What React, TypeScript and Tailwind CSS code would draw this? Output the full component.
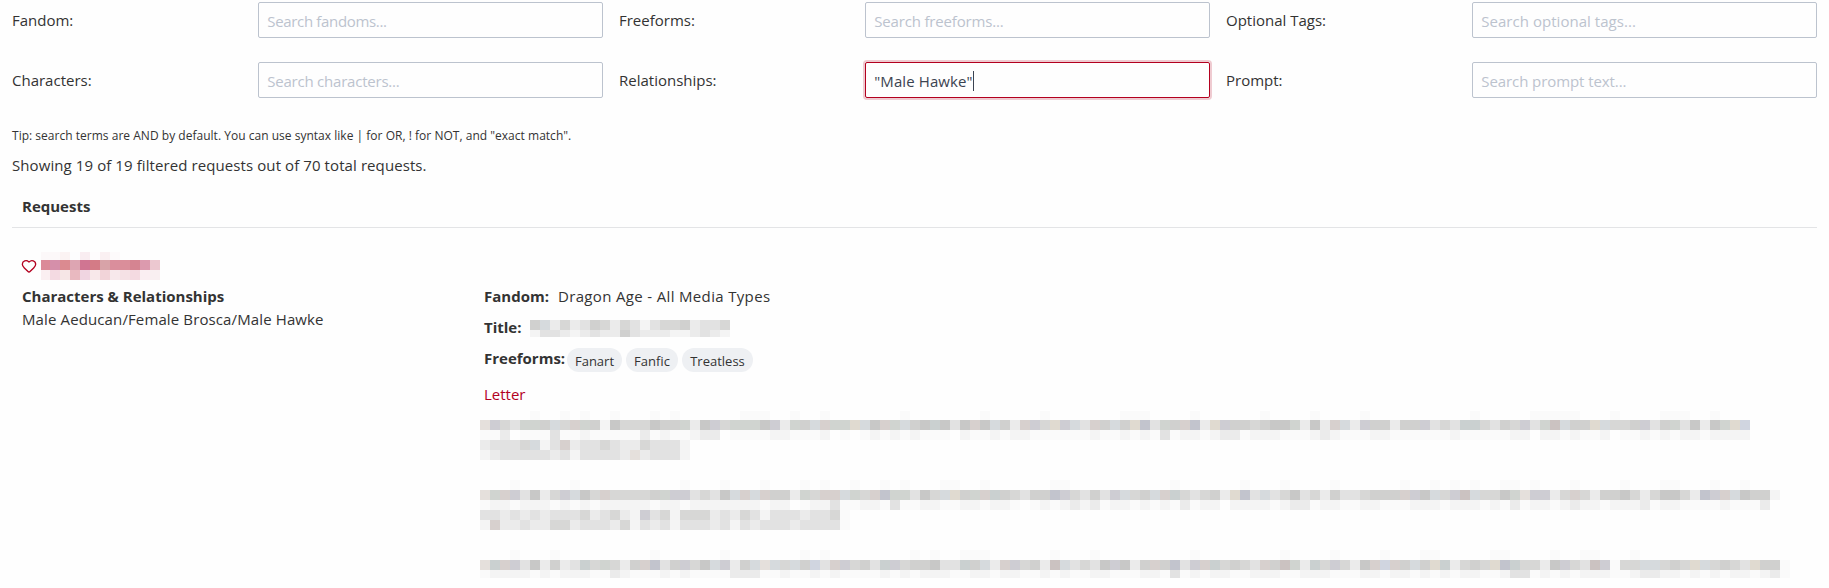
import { Heart } from "lucide-react";

const TONES: Record<string, string> = {
  "0": "bg-[#fefefe]",
  "1": "bg-[#fafafa]",
  "2": "bg-[#f4f4f4]",
  "3": "bg-[#ebebeb]",
  "4": "bg-[#e2e2e2]",
  "5": "bg-[#d7d7d6]",
  "6": "bg-[#d0d0cf]",
  "7": "bg-[#c8c8c7]",
  w: "bg-[#e5e0dc]",
  p: "bg-[#cecdd3]",
  b: "bg-[#d6dadd]",
  B: "bg-[#c2c4cd]",
  g: "bg-[#d0d4d0]",
  k: "bg-[#d7d0ce]",
  K: "bg-[#cbc2c1]",
  t: "bg-[#cad0d0]",
  y: "bg-[#e0dad0]",
  l: "bg-[#d0d5e0]",
};

function Cells({ data, h = "h-2.5" }: { data: string; h?: string }) {
  return (
    <div className={`flex ${h}`}>
      {data.split("").map((c, i) => (
        <div key={i} className={`h-full w-2.5 shrink-0 ${TONES[c] ?? ""}`} />
      ))}
    </div>
  );
}

function sparse(indices: number[]) {
  return Array.from({ length: 130 }, (_, i) => (indices.includes(i) ? "1" : ".")).join("");
}

const PARA_1 = [
  sparse([5, 8, 10, 13, 17, 19, 26, 27, 28, 31, 34, 42, 50, 56, 64, 65, 66, 71, 78, 83, 88, 99, 105, 106, 107, 108, 109, 113, 118, 119, 120, 123]),
  "wp54gg6b5kg6275557" + "66g37p5ggg7p3g6bkggyb7kgb67" + "t747k7b63kp5ypb4k6b6yB4g6kB3yp665677g373kb3p66" + "366p454tt5465p4gKb66yb556p46g4737gyl",
  "113011141121111131211233011112211120101212121" + "1102112122111111211212141221233122211123211122" + "111111211111220221211201121212212222",
  "34445b24k34454335444" + "2",
  "234444434244443w34442",
];

const PARA_2 = [
  sparse([3, 9, 20, 24, 28, 32, 34, 37, 40, 42, 46, 47, 50, 57, 58, 69, 76, 80, 85, 92, 95, 97, 99, 102, 103, 105, 109, 114, 118, 119, 123, 126]),
  "wgkp4735pb75k55556gpp4547bkbk663g5kkbg5kBgg47" + "5by6gkt65466Bp5464pb56bkt54563yB4b457453644566" + "6kp7b5pKb557gwpp35k5366753577" + "53Bpkb7662",
  "122122212121222221221222222212201224112214112" + "2112212210121232312212121312202222123312211221" + "11222122212131221232212223122111121113",
  "4434343444534532p4525553435424443445" + "1",
  "2k33433553444352434244434243444344" + "441",
];

const PARA_3 = [
  sparse([3, 7, 17, 24, 32, 34, 43, 45, 48, 49, 50, 57, 61, 71, 80, 85, 90, 94, 95, 101, 102, 107, 110, 111, 115]),
  "wtkp473634t5g536kB46p57bp36bwb5b6l4kp564tp566" + "744t6b3kp563Kb4547p736k6B4pkt5654k6Kg3t5p537kl" + "k6b6yt3565yBt5537p54Kp155bb565yb5654y661",
  "122221212221132111212111133311211212111121212" + "2211221221121211221112214121221122211222111221" + "2212121221124412121222112332212121221231",
];

const FIELDS = [
  { label: "Fandom:", placeholder: "Search fandoms...", tracking: "tracking-[-0.33px]" },
  { label: "Freeforms:", placeholder: "Search freeforms...", tracking: "tracking-[-0.17px]" },
  { label: "Optional Tags:", placeholder: "Search optional tags...", tracking: "tracking-[0.04px]" },
  { label: "Characters:", placeholder: "Search characters...", tracking: "tracking-[-0.22px]" },
  { label: "Relationships:", value: '"Male Hawke"', tracking: "tracking-[0.1px]" },
  { label: "Prompt:", placeholder: "Search prompt text...", tracking: "tracking-[-0.08px]" },
];

type FieldProps = { label: string; placeholder?: string; value?: string; tracking: string };

function Field({ label, placeholder, value, tracking }: FieldProps) {
  return (
    <label className="flex h-9 px-2">
      <span className="w-5/12 pt-[7px] leading-[22px]">{label}</span>
      <span
        className={`flex flex-1 items-center rounded-[2px] border px-2 pt-0.5 ${tracking} ${
          value ? "border-[#b3001f] text-[#3b4351] shadow-[0_0_0_2px_rgba(179,0,31,0.2)]" : "border-[#bcc3ce] text-[#bcc3ce]"
        }`}
      >
        {value ?? placeholder}
        {value && <span className="h-5 w-px bg-[#3b4351]" />}
      </span>
    </label>
  );
}

const NAME_TOP = ["bg-[#fcf8f9]", "bg-[#fcf8f9]", "bg-[#fbf3f3]", "bg-[#fdfdfe]", "bg-[#f9edf1]", "bg-[#fefcfd]", "bg-[#faf0f2]", "bg-[#fdfafb]"];
const NAME_MID = ["bg-[#db8a98]", "bg-[#d58faa]", "bg-[#db8a90]", "bg-[#dda5b2]", "bg-[#d07592]", "bg-[#d47b86]", "bg-[#d8a3a8]", "bg-[#da8e9c]", "bg-[#da8e9a]", "bg-[#d58491]", "bg-[#dc9aae]", "bg-[#ecc8d0]"];
const NAME_LOW = ["bg-[#faeff1]", "bg-[#f4dae2]", "bg-[#f6e6e6]", "bg-[#e9b9c0]", "bg-[#f0d5e1]", "bg-[#f8e8ea]", "bg-[#f2d4d9]", "bg-[#f7e8eb]", "bg-[#f5e1e5]", "bg-[#f4dae1]", "bg-[#faeef2]", "bg-[#f9eff1]"];

function NameRow({ tones, h }: { tones: string[]; h: string }) {
  return (
    <div className={`flex ${h}`}>
      {tones.map((t, i) => (
        <div key={i} className={`h-full shrink-0 ${i === 0 ? "w-[9px]" : "w-2.5"} ${t}`} />
      ))}
    </div>
  );
}

function Paragraph({ rows, first = "h-2.5", last = "h-2.5" }: { rows: string[]; first?: string; last?: string }) {
  return (
    <div>
      {rows.map((r, i) => (
        <Cells key={i} data={r} h={i === 0 ? first : i === rows.length - 1 ? last : "h-2.5"} />
      ))}
    </div>
  );
}

export default function App() {
  return (
    <main className="h-[588px] overflow-hidden bg-[#fefefe] px-1 pt-0.5 font-['Open_Sans','Noto_Sans',sans-serif] text-[15px] text-[#333333]">
      <div className="grid grid-cols-3 gap-y-6">
        {FIELDS.map((f) => (
          <Field key={f.label} {...f} />
        ))}
      </div>
      <div className="px-2">
        <p className="mt-[28px] text-[12px] leading-5 tracking-[0.02px]">
          Tip: search terms are AND by default. You can use syntax like | for OR, ! for NOT, and "exact match".
        </p>
        <p className="mt-[7px] leading-6 tracking-[0.09px]">Showing 19 of 19 filtered requests out of 70 total requests.</p>
        <div className="mt-[13px] h-[38px] border-b border-[#e3e4e6] px-2.5 pt-1 leading-6 font-bold">
          <span>Requests</span>
        </div>
        <div className="flex pl-2.5">
          <section className="w-[458px] shrink-0 pt-[24px]">
            <div className="flex h-7">
              <Heart className="-ml-px mt-1.5 mr-1 size-4 text-[#b3001f]" strokeWidth={2} />
              <div>
                <NameRow tones={NAME_TOP} h="h-2" />
                <NameRow tones={NAME_MID} h="h-2.5" />
                <NameRow tones={NAME_LOW} h="h-2.5" />
              </div>
            </div>
            <h2 className="mt-1 leading-6 font-bold">Characters &amp; Relationships</h2>
            <p className="leading-[22px] tracking-[0.12px]">Male Aeducan/Female Brosca/Male Hawke</p>
          </section>
          <section className="pt-14">
            <div className="pl-1">
              <div className="flex h-[31px] leading-6">
                <b className="w-[74px]">Fandom:</b>
                <span className="tracking-[0.34px]">Dragon Age - All Media Types</span>
              </div>
              <div className="flex h-[31px] leading-6">
                <b className="w-[46px]">Title:</b>
                <div className="pt-[5px]">
                  <Cells data="6b353465354245563445" />
                  <Cells data="24432343364333223432" h="h-[7px]" />
                </div>
              </div>
              <div className="flex h-9 leading-6">
                <b className="w-[83px]">Freeforms:</b>
                <div className="mt-0.5 flex h-6 gap-1 text-[13px] leading-[26px]">
                  <span className="w-[55px] rounded-full bg-[#eef0f3] text-center">Fanart</span>
                  <span className="w-[52px] rounded-full bg-[#eef0f3] text-center">Fanfic</span>
                  <span className="w-[71px] rounded-full bg-[#eef0f3] text-center">Treatless</span>
                </div>
              </div>
              <a className="block h-[29px] leading-6 text-[#b3001f]">Letter</a>
            </div>
            <div className="flex flex-col gap-5">
              <Paragraph rows={PARA_1} first="h-[9px]" />
              <Paragraph rows={PARA_2} />
              <Paragraph rows={PARA_3} last="h-2" />
            </div>
          </section>
        </div>
      </div>
    </main>
  );
}
